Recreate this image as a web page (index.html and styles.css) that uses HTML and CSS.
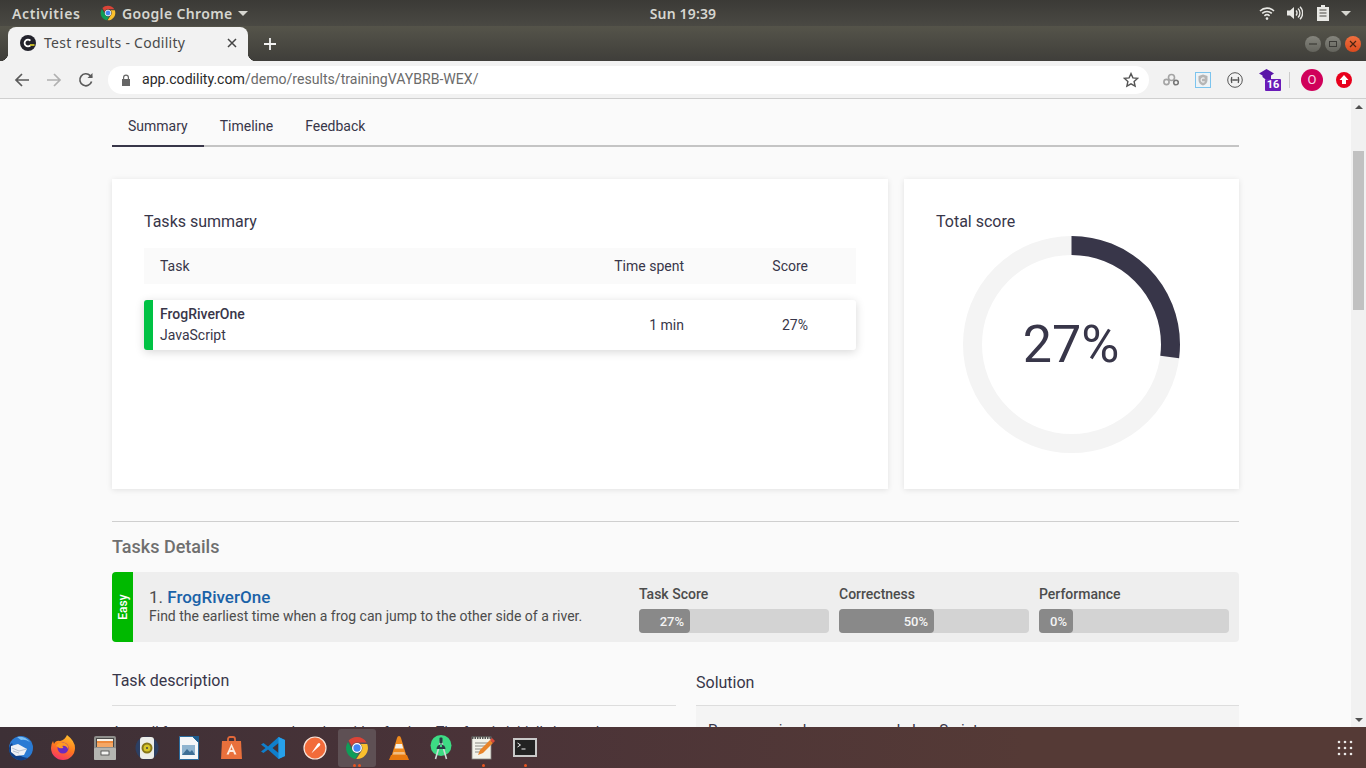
FILE: index.html
```html
<!DOCTYPE html>
<html lang="en">

<head>
    <meta charset="UTF-8">
    <title>Test results - Codility</title>
    <link rel="stylesheet" href="styles.css">
</head>

<body>

    <!-- desktop top bar -->
    <div class="topbar">
        <div class="topbar-left">
            <span class="activities">Activities</span>
            <svg class="app-icon" width="16" height="16" viewBox="0 0 24 24">
                <path d="M12 1a11 11 0 0 1 9.5 5.5H12a5.5 5.5 0 0 0-5.2 3.6L3.6 4.6A11 11 0 0 1 12 1z" fill="#db4437"/>
                <path d="M22.2 8a11 11 0 0 1-10.9 15l4.9-7.5a5.5 5.5 0 0 0-.6-7.5z" fill="#fbc02d"/>
                <path d="M10.3 22.9A11 11 0 0 1 2.9 5.9l4.7 8.3a5.5 5.5 0 0 0 6.3 3.1z" fill="#0f9d58"/>
                <circle cx="12" cy="12" r="4.3" fill="#4285f4" stroke="#fff" stroke-width="1.3"/>
            </svg>
            <span class="app-name">Google Chrome</span>
            <span class="caret"></span>
        </div>
        <div class="clock">Sun 19:39</div>
        <div class="topbar-right">
            <svg class="tray-wifi" width="16" height="16" viewBox="0 0 16 16" fill="none" stroke="#e8e8e4" stroke-width="1.6">
                <path d="M1 6a10 10 0 0 1 14 0"/>
                <path d="M3.2 8.4a7 7 0 0 1 9.6 0"/>
                <path d="M5.4 10.8a4 4 0 0 1 5.2 0"/>
                <circle cx="8" cy="13.6" r="1.3" fill="#e8e8e4" stroke="none"/>
            </svg>
            <svg class="tray-volume" width="17" height="16" viewBox="0 0 17 16" fill="none" stroke="#e8e8e4" stroke-width="1.4">
                <path d="M1 5.5h3L8 2v12l-4-3.5H1z" fill="#e8e8e4" stroke="none"/>
                <path d="M10 5.5a3.5 3.5 0 0 1 0 5"/>
                <path d="M12 3.5a6.2 6.2 0 0 1 0 9"/>
                <path d="M14 1.8a8.6 8.6 0 0 1 0 12.4"/>
            </svg>
            <svg class="tray-battery" width="12" height="16" viewBox="0 0 12 16">
                <path d="M4 0h4v2h4v14H0V2h4z" fill="#e8e8e4"/>
                <path d="M2.5 5h7M2.5 8h7M2.5 11h7" stroke="#4a4943" stroke-width="1.2"/>
            </svg>
            <span class="caret caret-right"></span>
        </div>
    </div>

    <!-- chrome tab strip -->
    <div class="tabstrip">
        <div class="tab">
            <svg width="16" height="16" viewBox="0 0 16 16">
                <circle cx="8" cy="8" r="8" fill="#22222c"/>
                <path d="M10.4 5.6a3.4 3.4 0 1 0 0 4.8" fill="none" stroke="#fff" stroke-width="1.8"/>
                <rect x="10" y="9.2" width="4.5" height="1.6" fill="#e6d92b"/>
            </svg>
            <span class="tab-title">Test results - Codility</span>
            <svg class="tab-close" width="10" height="10" viewBox="0 0 10 10">
                <path d="M1 1l8 8M9 1l-8 8" stroke="#444" stroke-width="1.5"/>
            </svg>
        </div>
        <svg class="new-tab" width="12" height="12" viewBox="0 0 12 12">
            <path d="M6 0v12M0 6h12" stroke="#f2f2f2" stroke-width="1.8"/>
        </svg>
        <div class="window-buttons">
            <span class="win-btn"><svg width="8" height="8" viewBox="0 0 8 8"><path d="M0 4h8" stroke="#3c3b37" stroke-width="1.2"/></svg></span>
            <span class="win-btn"><svg width="8" height="8" viewBox="0 0 8 8"><rect x="0.5" y="1.5" width="7" height="5" fill="none" stroke="#3c3b37"/></svg></span>
            <span class="win-btn win-close"><svg width="8" height="8" viewBox="0 0 8 8"><path d="M1 1l6 6M7 1l-6 6" stroke="#4a2412" stroke-width="1.2"/></svg></span>
        </div>
    </div>

    <!-- chrome toolbar -->
    <div class="toolbar">
        <div class="nav-buttons">
            <svg width="16" height="16" viewBox="0 0 16 16" fill="none" stroke="#5a5a5a" stroke-width="1.7">
                <path d="M15 8H2M8 2L2 8l6 6"/>
            </svg>
            <svg width="16" height="16" viewBox="0 0 16 16" fill="none" stroke="#b0b0b0" stroke-width="1.7">
                <path d="M1 8h13M8 2l6 6-6 6"/>
            </svg>
            <svg width="16" height="16" viewBox="0 0 16 16" fill="none" stroke="#5a5a5a" stroke-width="1.7">
                <path d="M13.6 9.5A6 6 0 1 1 12.2 3.6L14 5.5"/>
                <path d="M14.5 1v5h-5" fill="#5a5a5a" stroke="none"/>
            </svg>
        </div>
        <div class="omnibox">
            <svg width="10" height="12" viewBox="0 0 10 12">
                <path d="M2 5V3.5a3 3 0 0 1 6 0V5h1v7H1V5zM3.2 5h3.600V3.5a1.8 1.8 0 0 0-3.600 0z" fill="#666" fill-rule="evenodd"/>
            </svg>
            <span class="url"><b>app.codility.com</b>/demo/results/trainingVAYBRB-WEX/</span>
            <svg width="16" height="16" viewBox="0 0 16 16">
                <path d="M8 1.6l1.9 4.3 4.6.5-3.4 3.1 1 4.6L8 11.8l-4.1 2.3 1-4.6L1.5 6.4l4.6-.5z" fill="none" stroke="#555" stroke-width="1.4"/>
            </svg>
        </div>
        <div class="extensions">
            <svg class="ext" width="16" height="14" viewBox="0 0 16 14" fill="none" stroke="#a4a4a4" stroke-width="1.6">
                <circle cx="3.5" cy="9" r="2.6"/>
                <circle cx="8.5" cy="4.5" r="3"/>
                <circle cx="13" cy="9.5" r="2.3" stroke="#777"/>
            </svg>
            <svg class="ext" width="16" height="16" viewBox="0 0 16 16">
                <rect x="0.5" y="0.5" width="15" height="15" fill="#eef3f6" stroke="#7cc4ee"/>
                <path d="M8 2.5l4.500 1.500v4c0 3-2 4.500-4.500 5.500-2.500-1-4.500-2.500-4.500-5.500V4z" fill="#b5b5b5"/>
                <path d="M9.5 6.5a2 2 0 1 0 0 3" fill="none" stroke="#f0f0f0" stroke-width="1.2"/>
            </svg>
            <svg class="ext" width="16" height="16" viewBox="0 0 16 16" fill="none" stroke="#555">
                <circle cx="8" cy="8" r="7.3"/>
                <path d="M4.8 5q-1 3 0 6M11.2 5q1 3 0 6M5.2 8h5.600" stroke-width="1.3"/>
            </svg>
            <div class="ext-badge">
                <svg width="15" height="13" viewBox="0 0 15 13">
                    <path d="M7.5 0L15 4.500 12 6.500V10H6L3.500 8V6.500L0 4.500z" fill="#5b16a8"/>
                </svg>
                <span class="badge-count">16</span>
            </div>
            <span class="ext-sep"></span>
            <span class="avatar">O</span>
            <svg width="16" height="16" viewBox="0 0 16 16">
                <circle cx="8" cy="8" r="8" fill="#e8001c"/>
                <path d="M8 3l4.500 5H10v4H6V8H3.500z" fill="#fff"/>
            </svg>
        </div>
    </div>

    <div class="viewport">
        <div class="page">

            <div class="tabs">
                <span class="tab-link active">Summary</span>
                <span class="tab-link">Timeline</span>
                <span class="tab-link">Feedback</span>
            </div>

            <div class="cards">
                <div class="card summary-card">
                    <h3>Tasks summary</h3>
                    <div class="task-head">
                        <span>Task</span>
                        <span class="col-time">Time spent</span>
                        <span class="col-score">Score</span>
                    </div>
                    <div class="task-row">
                        <div class="task-name">
                            <strong>FrogRiverOne</strong>
                            <span>JavaScript</span>
                        </div>
                        <span class="col-time">1 min</span>
                        <span class="col-score">27%</span>
                    </div>
                </div>
                <div class="card score-card">
                    <h3>Total score</h3>
                    <div class="donut">
                        <svg width="218" height="218" viewBox="0 0 218 218">
                            <circle cx="109.5" cy="108.5" r="99" fill="none" stroke="#f4f4f4" stroke-width="19"/>
                            <circle cx="109.5" cy="108.5" r="99" fill="none" stroke="#383649" stroke-width="19"
                                stroke-dasharray="167.95 622.04" transform="rotate(-90 109.5 108.5)"/>
                        </svg>
                        <span class="donut-value">27%</span>
                    </div>
                </div>
            </div>

            <div class="details">
                <h2>Tasks Details</h2>
                <div class="task-bar">
                    <div class="difficulty"><span>Easy</span></div>
                    <div class="task-info">
                        <div class="task-title">1. <a href="#">FrogRiverOne</a></div>
                        <div class="task-desc">Find the earliest time when a frog can jump to the other side of a river.</div>
                    </div>
                    <div class="metrics">
                        <div class="metric">
                            <div class="metric-label">Task Score</div>
                            <div class="meter"><div class="meter-fill" style="width: 51px">27%</div></div>
                        </div>
                        <div class="metric">
                            <div class="metric-label">Correctness</div>
                            <div class="meter"><div class="meter-fill" style="width: 95px">50%</div></div>
                        </div>
                        <div class="metric">
                            <div class="metric-label">Performance</div>
                            <div class="meter"><div class="meter-fill" style="width: 34px">0%</div></div>
                        </div>
                    </div>
                </div>

                <div class="columns">
                    <div class="description">
                        <h4>Task description</h4>
                        <p>A small frog wants to get to the other side of a river. The frog is initially located</p>
                    </div>
                    <div class="solution">
                        <h4>Solution</h4>
                        <div class="solution-panel">Programming language used: JavaScript</div>
                    </div>
                </div>
            </div>

        </div>

        <div class="scrollbar">
            <span class="scroll-arrow up"></span>
            <div class="scroll-track"><div class="scroll-thumb"></div></div>
            <span class="scroll-arrow down"></span>
        </div>
    </div>

    <!-- ubuntu dock -->
    <div class="dock">
        <div class="dock-item">
            <svg width="26" height="26" viewBox="0 0 26 26">
                <circle cx="13" cy="13" r="12" fill="#2a7bd4"/>
                <path d="M1 13a12 12 0 0 0 19 10Q8 22 4 8 1 10 1 13z" fill="#0f3f85"/>
                <path d="M9 2q8-1 13 5-5-3-9-2z" fill="#7cc0f4"/>
                <path d="M3 11l7-2 9 5-3 6-8 1-5-4z" fill="#eef1f5"/>
                <path d="M4 13l7 3 8-2M5 16l6 2" fill="none" stroke="#a9b8c9" stroke-width="0.8"/>
            </svg>
        </div>
        <div class="dock-item">
            <svg width="24" height="25" viewBox="0 0 24 25">
                <defs>
                    <linearGradient id="foxGlow" x1="0.7" y1="0" x2="0.3" y2="1">
                        <stop offset="0" stop-color="#ffbd2e"/>
                        <stop offset="0.5" stop-color="#ff7a1c"/>
                        <stop offset="1" stop-color="#f5306a"/>
                    </linearGradient>
                </defs>
                <path d="M16 0q8 6 8 13a12 12 0 0 1-24 0q0-4 2-7l1 3q2-4 6-3 5-1 7-6z" fill="url(#foxGlow)"/>
                <circle cx="12" cy="13" r="5.5" fill="#6a2bc0"/>
                <path d="M5 11q3-5 9-3 4 2 3 6-2-4-6-3 2 1 1 2-4 1-5-1z" fill="#ff9a22"/>
            </svg>
        </div>
        <div class="dock-item">
            <svg width="24" height="24" viewBox="0 0 24 24">
                <rect x="1" y="0" width="22" height="24" rx="2" fill="#8f8f8c"/>
                <rect x="3" y="2" width="18" height="9" fill="#4a4a48"/>
                <rect x="4" y="3" width="16" height="2" fill="#f6f2ea"/>
                <rect x="4" y="5" width="16" height="2" fill="#ed8a3c"/>
                <rect x="4" y="7" width="16" height="4" fill="#f4a765"/>
                <rect x="1" y="12" width="22" height="12" rx="1" fill="#b5b5b1"/>
                <rect x="8" y="15" width="8" height="4" fill="#f4f4f2" stroke="#444" stroke-width="0.8"/>
            </svg>
        </div>
        <div class="dock-item">
            <svg width="24" height="24" viewBox="0 0 24 24">
                <circle cx="12" cy="12" r="11.5" fill="#2c3f63"/>
                <rect x="5" y="1" width="14" height="22" rx="3" fill="#eceeea"/>
                <circle cx="12" cy="12" r="5.5" fill="#86761a"/>
                <circle cx="12" cy="12" r="3.5" fill="#d7c62a"/>
                <circle cx="12" cy="12" r="1" fill="#444"/>
            </svg>
        </div>
        <div class="dock-item">
            <svg width="20" height="24" viewBox="0 0 20 24">
                <path d="M0.5 0.5h13l6 6v17h-19z" fill="#f4f6f8" stroke="#2a6c9e"/>
                <path d="M13 0h7v7z" fill="#1d5c8c"/>
                <rect x="3" y="9" width="13" height="10" fill="#8fb4d0"/>
                <path d="M3 19l5-6 3 3 2-2 3 5z" fill="#3e6f96"/>
            </svg>
        </div>
        <div class="dock-item">
            <svg width="21" height="23" viewBox="0 0 21 23">
                <path d="M7 5V3a2 2 0 0 1 2-2h3a2 2 0 0 1 2 2v2" fill="none" stroke="#e2683a" stroke-width="1.8"/>
                <path d="M1 5h19l1 18H0z" fill="#e9703c"/>
                <path d="M10.5 7.5l5 11h-2.3l-.9-2.5H8.700l-.9 2.500H5.500zM9.400 14h2.200l-1.100-3z" fill="#fbeadf" fill-rule="evenodd"/>
            </svg>
        </div>
        <div class="dock-item">
            <svg width="24" height="24" viewBox="0 0 24 24">
                <path d="M17.5 1L24 4v16l-6.5 3L7 13.5 2.5 17 0 15.5 4.5 12 0 8.5 2.5 7 7 10.5z" fill="#0f7fcc"/>
                <path d="M17.5 7l-6 5 6 5z" fill="#433136"/>
                <path d="M17.5 1L24 4v16l-6.5 3z" fill="#27a0ea"/>
            </svg>
        </div>
        <div class="dock-item">
            <svg width="24" height="24" viewBox="0 0 24 24">
                <circle cx="12" cy="12" r="11" fill="#f26b3a" stroke="#f8e4da" stroke-width="1.2"/>
                <path d="M7 18q2-1 3.5-4l4-6q1.500-1.500 2.500-.5t-.5 2.500l-5 4.500q-2 2-4.500 3.500z" fill="#fff"/>
            </svg>
        </div>
        <div class="dock-item active">
            <svg width="24" height="24" viewBox="0 0 24 24">
                <path d="M12 1a11 11 0 0 1 9.5 5.5H12a5.5 5.5 0 0 0-5.2 3.6L3.6 4.6A11 11 0 0 1 12 1z" fill="#db4437"/>
                <path d="M22.2 8a11 11 0 0 1-10.9 15l4.9-7.5a5.5 5.5 0 0 0-.6-7.5z" fill="#fbc02d"/>
                <path d="M10.3 22.9A11 11 0 0 1 2.9 5.9l4.7 8.3a5.5 5.5 0 0 0 6.3 3.1z" fill="#0f9d58"/>
                <circle cx="12" cy="12" r="4.3" fill="#4285f4" stroke="#fff" stroke-width="1.3"/>
            </svg>
            <span class="dots"><i></i><i></i></span>
        </div>
        <div class="dock-item">
            <svg width="20" height="24" viewBox="0 0 20 24">
                <path d="M10 0q1.500 0 2 2l5.500 18h-15L8 2q.5-2 2-2z" fill="#f08a1d"/>
                <path d="M7 8h6l1.200 4.500H5.800z" fill="#f2f0ea"/>
                <path d="M4.600 16h10.800l.8 2.500H3.800z" fill="#f2f0ea" opacity="0.5"/>
                <path d="M2 19h16l2 5H0z" fill="#e87a10"/>
            </svg>
        </div>
        <div class="dock-item">
            <svg width="22" height="25" viewBox="0 0 22 25">
                <circle cx="11" cy="10.5" r="10.5" fill="#3ddc84"/>
                <path d="M11 5L16.5 24M11 5L5.500 24" stroke="#cfdad6" stroke-width="1.6"/>
                <path d="M6.5 14a4.500 4.500 0 0 1 9 0z" fill="#2a3a44"/>
                <rect x="9.5" y="2.5" width="3" height="6" rx="1" fill="#2a3a44"/>
                <circle cx="11" cy="11" r="1.2" fill="#3ddc84"/>
            </svg>
        </div>
        <div class="dock-item">
            <svg width="24" height="25" viewBox="0 0 24 25">
                <rect x="1" y="2" width="19" height="22" fill="#f3f2ea" stroke="#8a8a84" stroke-width="0.8"/>
                <path d="M1 2.5h19" stroke="#555" stroke-width="3" stroke-dasharray="1.500 1"/>
                <path d="M4 8h13M4 11h13M4 14h7M4 17h5" stroke="#8a8a84"/>
                <path d="M7 20l2-5L19 5l3 3L12 18z" fill="#e8842a"/>
                <path d="M19 5l2-2 3 3-2 2z" fill="#d84a38"/>
            </svg>
            <span class="dots"><i></i></span>
        </div>
        <div class="dock-item">
            <svg width="24" height="19" viewBox="0 0 24 19">
                <rect x="1" y="1" width="22" height="17" fill="#222" stroke="#c9c9c9" stroke-width="2"/>
                <path d="M4.500 5l3 2-3 2" fill="none" stroke="#eee"/>
                <path d="M8.500 11h4" stroke="#eee"/>
            </svg>
            <span class="dots"><i></i></span>
        </div>
        <div class="dock-grid">
            <svg width="16" height="16" viewBox="0 0 16 16" fill="#ece9e8">
                <circle cx="2" cy="2" r="1.300"/><circle cx="8" cy="2" r="1.300"/><circle cx="14" cy="2" r="1.300"/>
                <circle cx="2" cy="8" r="1.300"/><circle cx="8" cy="8" r="1.300"/><circle cx="14" cy="8" r="1.300"/>
                <circle cx="2" cy="14" r="1.300"/><circle cx="8" cy="14" r="1.300"/><circle cx="14" cy="14" r="1.300"/>
            </svg>
        </div>
    </div>

</body>

</html>
```

FILE: styles.css
```css
* {
    box-sizing: border-box;
}

body {
    margin: 0;
    width: 1366px;
    height: 768px;
    overflow: hidden;
    display: flex;
    flex-direction: column;
    font-family: Roboto, sans-serif;
    color: #383649;
    background-color: #fafafa;
}

/* top bar */
.topbar {
    height: 26px;
    flex: none;
    display: grid;
    grid-template-columns: 1fr auto 1fr;
    align-items: center;
    padding: 0 12px;
    background: linear-gradient(#3b3a36, #4a4943);
    color: #d6d6d0;
    font-family: "Noto Sans", sans-serif;
    font-size: 14px;
    font-weight: 600;
}

.topbar-left,
.topbar-right {
    display: flex;
    align-items: center;
}

.topbar-right {
    justify-content: flex-end;
    padding-right: 3px;
}

.tray-wifi {
    margin-right: 11px;
}

.tray-volume {
    margin-right: 14px;
}

.tray-battery {
    margin-right: 12px;
}

.activities {
    width: 88px;
    letter-spacing: 0.6px;
}

.app-icon {
    margin-right: 6px;
}

.app-name {
    letter-spacing: 0.35px;
}

.clock {
    letter-spacing: 0.15px;
}

.caret {
    margin-left: 6px;
    border-left: 5px solid transparent;
    border-right: 5px solid transparent;
    border-top: 5px solid #d6d6d0;
}

.caret-right {
    margin-left: 0;
}

/* tab strip */
.tabstrip {
    height: 35px;
    flex: none;
    display: flex;
    align-items: flex-end;
    padding-left: 8px;
    background: linear-gradient(#55544a, #3f3e3a);
}

.tab {
    position: relative;
    width: 240px;
    height: 34px;
    display: flex;
    align-items: center;
    padding: 0 12px 3px;
    background-color: #f2f2f2;
    border-radius: 8px 8px 0 0;
    font-family: "Noto Sans", sans-serif;
    font-size: 14px;
    letter-spacing: 0.27px;
    color: #4a4a4a;
}

/* the flared feet of the tab */
.tab::before,
.tab::after {
    content: "";
    position: absolute;
    bottom: 0;
    width: 8px;
    height: 8px;
}

.tab::before {
    left: -8px;
    background: radial-gradient(circle at 0 0, transparent 8px, #f2f2f2 8.5px);
}

.tab::after {
    right: -8px;
    background: radial-gradient(circle at 100% 0, transparent 8px, #f2f2f2 8.5px);
}

.tab-title {
    margin-left: 8px;
    flex: 1;
}

.tab-close {
    margin-right: -1px;
}

.new-tab {
    margin: 0 0 11px 16px;
}

.window-buttons {
    margin: 0 5px 9px auto;
    display: flex;
    gap: 4px;
}

.win-btn {
    width: 16px;
    height: 16px;
    border-radius: 50%;
    display: flex;
    align-items: center;
    justify-content: center;
    background: linear-gradient(#85857d, #64645d);
}

.win-close {
    background: linear-gradient(#f0703f, #dc4a1e);
}

/* toolbar */
.toolbar {
    height: 38px;
    flex: none;
    display: flex;
    align-items: center;
    padding-left: 14px;
    background-color: #f2f2f2;
    border-bottom: 1px solid #cfcfcf;
}

.nav-buttons {
    display: flex;
    gap: 16px;
    width: 94px;
}

.omnibox {
    width: 1041px;
    height: 28px;
    display: flex;
    align-items: center;
    padding: 0 10px 0 13px;
    background-color: #fff;
    border-radius: 14px;
    font-size: 14.1px;
    color: #6b6b6b;
}

.url {
    margin-left: 11px;
    padding-bottom: 1px;
    flex: 1;
}

.url b {
    font-weight: 400;
    color: #2a2a2a;
}

.extensions {
    flex: 1;
    display: flex;
    align-items: center;
    padding-left: 14px;
}

.ext {
    margin-right: 16px;
}

.ext-badge {
    position: relative;
    width: 22px;
    height: 22px;
}

.ext-badge svg {
    position: absolute;
    left: 0;
    top: 0;
}

.badge-count {
    position: absolute;
    left: 6px;
    top: 10px;
    width: 16px;
    height: 12px;
    border-radius: 1px;
    background-color: #6a1bb8;
    color: #fff;
    font-size: 11px;
    font-weight: 700;
    line-height: 12px;
    text-align: center;
}

.ext-sep {
    width: 1px;
    height: 16px;
    margin: 0 11px 0 8px;
    background-color: #ccc;
}

.avatar {
    width: 22px;
    height: 22px;
    margin-right: 13px;
    border-radius: 50%;
    background-color: #d0005a;
    color: #f8d8e6;
    font-size: 13px;
    line-height: 22px;
    text-align: center;
}

/* page */
.viewport {
    flex: 1;
    min-height: 0;
    display: flex;
    background-color: #fafafa;
}

.page {
    flex: 1;
    overflow: hidden;
    padding: 0 112px;
}

.scrollbar {
    width: 15px;
    display: flex;
    flex-direction: column;
    background-color: #f1f1f1;
}

.scroll-arrow {
    height: 15px;
    flex: none;
    display: flex;
    align-items: center;
    justify-content: center;
}

.scroll-arrow::after {
    content: "";
    border-left: 4px solid transparent;
    border-right: 4px solid transparent;
}

.scroll-arrow.up::after {
    border-bottom: 4px solid #505050;
}

.scroll-arrow.down::after {
    border-top: 4px solid #505050;
}

.scroll-track {
    flex: 1;
    padding: 37px 2px 0;
}

.scroll-thumb {
    height: 159px;
    background-color: #c1c1c1;
}

.tabs {
    height: 48px;
    display: flex;
    border-bottom: 2px solid #c4c4c4;
    font-size: 14px;
}

.tab-link {
    height: 48px;
    padding: 0 16px;
    line-height: 54px;
}

.tab-link.active {
    border-bottom: 2px solid #383649;
}

.cards {
    margin-top: 32px;
    display: flex;
    gap: 16px;
}

.card {
    height: 310px;
    padding: 33px 32px 32px;
    background-color: #fff;
    box-shadow: 0 1px 6px rgba(0, 0, 0, 0.1);
}

.card h3 {
    margin: 0;
    font-size: 16px;
    font-weight: 400;
    line-height: 20px;
}

.summary-card {
    width: 776px;
}

.score-card {
    width: 335px;
}

.task-head,
.task-row {
    display: grid;
    grid-template-columns: 1fr 120px 172px;
    align-items: center;
    padding-left: 16px;
    font-size: 14px;
}

.task-head {
    height: 36px;
    margin-top: 16px;
    background-color: #fafafa;
}

.task-row {
    height: 50px;
    margin-top: 16px;
    background-color: #fff;
    border-left: 9px solid #00c244;
    border-radius: 3px;
    padding-left: 7px;
    box-shadow: 0 2px 10px rgba(0, 0, 0, 0.16);
}

.col-time {
    text-align: right;
}

.col-score {
    text-align: right;
    padding-right: 48px;
}

.task-name {
    display: flex;
    flex-direction: column;
    gap: 5px;
    padding-bottom: 2px;
}

.task-name strong {
    font-weight: 500;
}

.donut {
    position: relative;
    width: 218px;
    height: 218px;
    margin: 4px 0 0 26px;
}

.donut-value {
    position: absolute;
    left: 0;
    right: 0;
    top: 0;
    line-height: 218px;
    text-align: center;
    font-size: 52px;
}

/* details */
.details {
    margin-top: 32px;
    border-top: 1px solid #cfcfcf;
}

.details h2 {
    margin: 14px 0 15px;
    font-size: 18px;
    font-weight: 500;
    line-height: 21px;
    color: #6f6f6f;
}

.task-bar {
    height: 70px;
    display: flex;
    background-color: #eeeeee;
    border-radius: 4px;
}

.difficulty {
    width: 21px;
    display: flex;
    align-items: center;
    justify-content: center;
    background-color: #00b900;
    border-radius: 4px 0 0 4px;
    color: #fff;
    font-size: 12px;
    font-weight: 500;
}

.difficulty span {
    transform: rotate(-90deg);
}

.task-info {
    width: 506px;
    padding: 16px 0 0 16px;
    font-size: 14px;
    color: #4c4c4c;
}

.task-title {
    font-size: 17px;
    line-height: 19px;
}

.task-title a {
    color: #1a62a8;
    font-weight: 500;
    text-decoration: none;
}

.task-desc {
    margin-top: 1px;
}

.metrics {
    display: flex;
    gap: 10px;
    padding-top: 13px;
}

.metric {
    width: 190px;
}

.metric-label {
    font-size: 14px;
    font-weight: 500;
    line-height: 18px;
    color: #4c4c4c;
}

.meter {
    height: 24px;
    margin-top: 6px;
    background-color: #d3d3d3;
    border-radius: 4px;
}

.meter-fill {
    height: 24px;
    padding-right: 6px;
    background-color: #898989;
    border-radius: 4px;
    color: #f4f4f4;
    font-size: 13px;
    font-weight: 500;
    line-height: 26px;
    text-align: right;
}

.columns {
    display: flex;
    gap: 20px;
}

.description {
    width: 564px;
    padding-top: 29px;
}

.solution {
    flex: 1;
    padding-top: 31px;
}

.columns h4 {
    margin: 0;
    font-size: 16px;
    font-weight: 400;
    line-height: 20px;
    border-bottom: 1px solid #dddddd;
}

.description h4 {
    padding-bottom: 14px;
}

.solution h4 {
    padding-bottom: 12px;
}

.description p {
    margin: 16px 0 0;
    font-size: 14px;
    line-height: 20px;
}

.solution-panel {
    height: 60px;
    padding: 14px 12px;
    background-color: #f4f4f4;
    font-size: 15px;
    line-height: 20px;
}

/* dock */
.dock {
    height: 41px;
    flex: none;
    display: flex;
    align-items: center;
    gap: 4px;
    padding-left: 2px;
    background: linear-gradient(90deg, #3d3036, #4a3338 35%, #553a36 75%);
}

.dock-item {
    position: relative;
    width: 38px;
    height: 38px;
    display: flex;
    align-items: center;
    justify-content: center;
    border-radius: 3px;
}

.dock-item.active {
    background-color: #5e5054;
}

.dots {
    position: absolute;
    bottom: 0;
    left: 0;
    right: 0;
    display: flex;
    justify-content: center;
    gap: 2px;
}

.dots i {
    width: 3px;
    height: 3px;
    border-radius: 50%;
    background-color: #e95420;
}

.dock-grid {
    margin-left: auto;
    padding-right: 13px;
    display: flex;
}
```
